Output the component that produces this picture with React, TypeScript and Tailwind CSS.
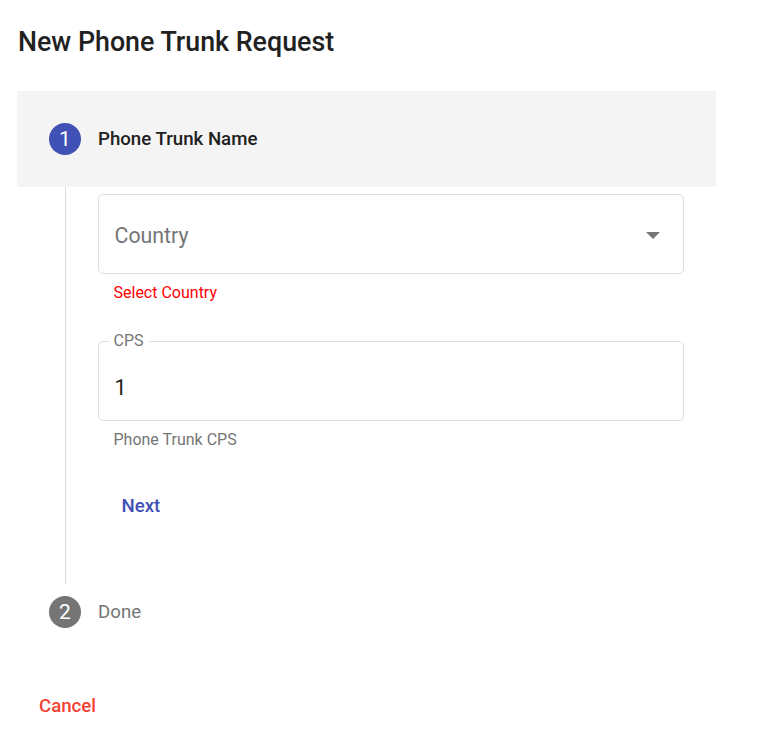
import React from 'react';

function StepIcon({ n, active }: { n: number; active?: boolean }) {
  return (
    <div
      className={`flex h-[32px] w-[32px] shrink-0 items-center justify-center rounded-full text-[21px] leading-none text-white ${
        active ? 'bg-[#3f51b5]' : 'bg-[#757575]'
      }`}
    >
      {n}
    </div>
  );
}

export default function App() {
  return (
    <div className="min-h-[734px] w-[776px] bg-white font-['Roboto',sans-serif]">
      <h2 className="px-[18px] pt-[24px] text-[26.8px] font-medium leading-[36px] text-[#212121]">
        New Phone Trunk Request
      </h2>

      <div className="mt-[31px] w-[699px] pl-[17px]">
        {/* step 1 */}
        <div className="flex h-[96px] w-[699px] items-center gap-[17px] bg-[#f4f4f4] px-[32px]">
          <StepIcon n={1} active />
          <span className="text-[18.67px] font-medium text-[#212121]">Phone Trunk Name</span>
        </div>

        <div className="ml-[47.5px] border-l border-[#dcdcdc] pl-[32px] pr-[32px] pt-[7px]">
          <div className="w-[586px]">
            <div className="flex h-[80px] items-center justify-between rounded-[5px] border border-[#dddddd] pl-[16px] pr-[23px] pt-[3px]">
              <span className="text-[21.33px] text-[#757575]">Country</span>
              <svg width="14" height="7" viewBox="0 0 14 7">
                <path d="M0 0 L14 0 L7 7 Z" fill="#757575" />
              </svg>
            </div>
            <p className="mt-[8px] pl-[16px] text-[16px] leading-[22px] text-[#ff0000]">Select Country</p>

            <fieldset className="mt-[32px] h-[85px] rounded-[5px] border border-[#dddddd] pl-[10px] pr-[16px]">
              <legend className="px-[5px] text-[16px] leading-[10px] text-[#757575]">CPS</legend>
              <div className="pl-[6px] pt-[28px] text-[21.33px] leading-[28px] text-[#212121]">1</div>
            </fieldset>
            <p className="mt-[8px] pl-[16px] text-[16px] leading-[22px] text-[#757575]">Phone Trunk CPS</p>

            <button className="ml-[8px] mt-[43px] px-[16px] text-[18.67px] font-medium leading-[24px] text-[#3f51b5]">
              Next
            </button>
          </div>
          <div className="h-[65px]" />
        </div>

        {/* step 2 */}
        <div className="flex items-center gap-[17px] px-[32px] pt-[12px]">
          <StepIcon n={2} />
          <span className="text-[18.67px] text-[#757575]">Done</span>
        </div>
      </div>

      <div className="pl-[39px] pt-[64px]">
        <button className="text-[18.67px] font-medium text-[#f44336]">Cancel</button>
      </div>
    </div>
  );
}
